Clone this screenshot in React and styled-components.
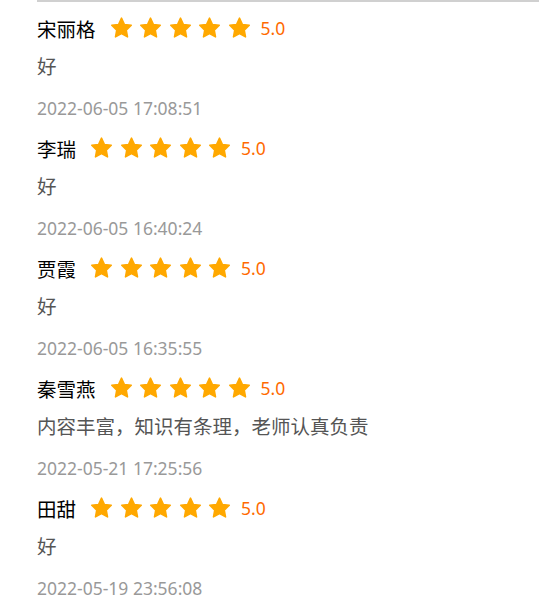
import styled, { createGlobalStyle } from "styled-components";

const GlobalStyle = createGlobalStyle`
  body {
    margin: 0;
    background: #fff;
    font-family: "Noto Sans", "Noto Sans CJK SC", sans-serif;
  }
`;

const List = styled.div`
  margin-left: 37px;
  border-top: 2px solid #d0d0d0;
`;

const Item = styled.div`
  display: flex;
  flex-direction: column;
  padding-top: 6px;
  height: 120px;
  box-sizing: border-box;
`;

const Head = styled.div`
  display: flex;
  align-items: center;
  height: 40px;
`;

const Name = styled.span`
  font-family: "Noto Sans CJK SC", sans-serif;
  font-size: 19.5px;
  color: #000;
  margin-right: 14px;
`;

const Stars = styled.div`
  display: flex;
  gap: 6.5px;
`;

const Score = styled.span`
  margin-left: 10px;
  font-size: 17.5px;
  color: #ff6a00;
`;

const Comment = styled.div`
  font-family: "Noto Sans CJK SC", sans-serif;
  font-size: 19.5px;
  line-height: 36px;
  height: 36px;
  color: #555;
`;

const Date = styled.div`
  margin-top: 10px;
  font-size: 17.5px;
  line-height: 28px;
  color: #999;
`;

const StarIcon = styled.svg`
  display: block;
  width: 23px;
  height: 22px;
`;

const Star = () => (
  <StarIcon viewBox="0 0 24 23">
    <path
      d="M12 1.2l3.1 6.6 7.1.9-5.2 5 1.3 7.1L12 17.4l-6.3 3.4L7 13.7l-5.2-5 7.1-.9z"
      fill="#ffa800"
      stroke="#ffa800"
      strokeWidth="1.6"
      strokeLinejoin="round"
    />
  </StarIcon>
);

const reviews = [
  { name: "宋丽格", text: "好", time: "2022-06-05 17:08:51" },
  { name: "李瑞", text: "好", time: "2022-06-05 16:40:24" },
  { name: "贾霞", text: "好", time: "2022-06-05 16:35:55" },
  { name: "秦雪燕", text: "内容丰富，知识有条理，老师认真负责", time: "2022-05-21 17:25:56" },
  { name: "田甜", text: "好", time: "2022-05-19 23:56:08" },
];

export default function App() {
  return (
    <>
      <GlobalStyle />
      <List>
        {reviews.map((r) => (
          <Item key={r.time}>
            <Head>
              <Name>{r.name}</Name>
              <Stars>
                {[0, 1, 2, 3, 4].map((i) => (
                  <Star key={i} />
                ))}
              </Stars>
              <Score>5.0</Score>
            </Head>
            <Comment>{r.text}</Comment>
            <Date>{r.time}</Date>
          </Item>
        ))}
      </List>
    </>
  );
}
